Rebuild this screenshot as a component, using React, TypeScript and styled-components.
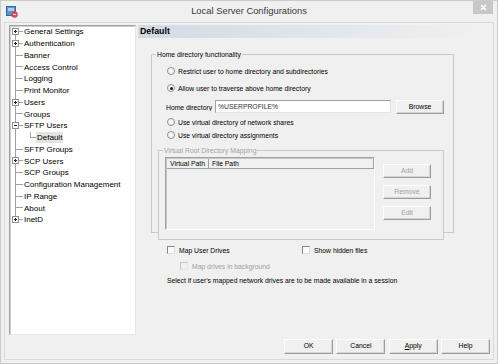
import React from "react";
import styled, { createGlobalStyle } from "styled-components";

const GlobalStyle = createGlobalStyle`
  html, body {
    margin: 0;
    padding: 0;
    background: #f0f0f0;
  }
  body {
    font-family: "Liberation Sans", Arial, sans-serif;
  }
`;

type TreeItem = {
  label: string;
  exp?: "+" | "-";
  child?: boolean;
  selected?: boolean;
};

const treeItems: TreeItem[] = [
  { label: "General Settings", exp: "+" },
  { label: "Authentication", exp: "+" },
  { label: "Banner" },
  { label: "Access Control" },
  { label: "Logging" },
  { label: "Print Monitor" },
  { label: "Users", exp: "+" },
  { label: "Groups" },
  { label: "SFTP Users", exp: "-" },
  { label: "Default", child: true, selected: true },
  { label: "SFTP Groups" },
  { label: "SCP Users", exp: "+" },
  { label: "SCP Groups" },
  { label: "Configuration Management" },
  { label: "IP Range" },
  { label: "About" },
  { label: "InetD", exp: "+" },
];

const ROW_H = 11.75;

const Connector = ({
  exp,
  first,
  last,
  child,
}: {
  exp?: "+" | "-";
  first?: boolean;
  last?: boolean;
  child?: boolean;
}) => {
  const cy = 5.5;
  const w = child ? 27 : 14;
  return (
    <svg width={w} height={ROW_H} style={{ display: "block", flexShrink: 0 }} shapeRendering="crispEdges">
      <line x1={5.5} x2={5.5} y1={first ? cy : 0} y2={last ? cy : ROW_H} stroke="#a0a0a0" />
      {child ? (
        <>
          <line x1={20.5} x2={20.5} y1={0} y2={cy} stroke="#a0a0a0" />
          <line x1={20.5} x2={26} y1={cy} y2={cy} stroke="#a0a0a0" />
        </>
      ) : (
        <line x1={5.5} x2={13} y1={cy} y2={cy} stroke="#a0a0a0" />
      )}
      {exp && (
        <>
          <rect x={2.5} y={2.5} width={6} height={6} fill="#fff" stroke="#919191" />
          <line x1={4} x2={7} y1={cy} y2={cy} stroke="#222" />
          {exp === "+" && <line x1={5.5} x2={5.5} y1={4} y2={7} stroke="#222" />}
        </>
      )}
    </svg>
  );
};

export default function App() {
  return (
    <>
      <GlobalStyle />
      <Styled.Frame>
        <Styled.TitleBar>
          <Styled.IconSlot>
            <svg width="12" height="12" viewBox="0 0 12 12">
              <rect x="0.5" y="0.5" width="9" height="9" fill="#5b93cf" stroke="#36689f" />
              <rect x="2" y="2" width="6" height="3" fill="#a9d0f0" />
              <circle cx="8.5" cy="8.5" r="3.2" fill="#d9474f" />
              <line x1="7" y1="8.5" x2="10" y2="8.5" stroke="#fbe3e3" strokeWidth="1" />
            </svg>
          </Styled.IconSlot>
          <Styled.Title>Local Server Configurations</Styled.Title>
          <Styled.CloseButton>
            <svg width="7" height="7" viewBox="0 0 7 7">
              <path d="M1 1L6 6M6 1L1 6" stroke="#fff" strokeWidth="1.6" />
            </svg>
          </Styled.CloseButton>
        </Styled.TitleBar>

        <Styled.Client>
          <Styled.Main>
            <Styled.Tree>
              {treeItems.map((it, i) => (
                <Styled.TreeRow key={it.label}>
                  <Connector
                    exp={it.exp}
                    child={it.child}
                    first={i === 0}
                    last={i === treeItems.length - 1}
                  />
                  <Styled.TreeLabel $selected={it.selected}>{it.label}</Styled.TreeLabel>
                </Styled.TreeRow>
              ))}
            </Styled.Tree>

            <Styled.Panel>
              <Styled.Header>Default</Styled.Header>
              <Styled.Content>
                <Styled.GroupBox $w={303} $mt={16} $ml={0}>
                  <Styled.Legend>Home directory functionality</Styled.Legend>
                  <Styled.OptionRow $mt={5} $ml={15}>
                    <Styled.Radio />
                    <span>Restrict user to home directory and subdirectories</span>
                  </Styled.OptionRow>
                  <Styled.OptionRow $mt={5} $ml={15}>
                    <Styled.Radio $checked />
                    <span>Allow user to traverse above home directory</span>
                  </Styled.OptionRow>
                  <Styled.HomeRow>
                    <Styled.FieldLabel>Home directory</Styled.FieldLabel>
                    <Styled.TextField>%USERPROFILE%</Styled.TextField>
                    <Styled.Button $w={48} $h={14} $ml={5}>
                      Browse
                    </Styled.Button>
                  </Styled.HomeRow>
                  <Styled.OptionRow $mt={2} $ml={15}>
                    <Styled.Radio />
                    <span>Use virtual directory of network shares</span>
                  </Styled.OptionRow>
                  <Styled.OptionRow $mt={1} $ml={15}>
                    <Styled.Radio />
                    <span>Use virtual directory assignments</span>
                  </Styled.OptionRow>

                  <Styled.GroupBox $w={286} $mt={9} $ml={6} $mb={-8}>
                    <Styled.Legend $disabled>Virtual Root Directory Mapping</Styled.Legend>
                    <Styled.MappingBody>
                      <Styled.ListView>
                        <Styled.ListHeader>
                          <Styled.HeaderCell $w={42}>Virtual Path</Styled.HeaderCell>
                          <Styled.HeaderCell>File Path</Styled.HeaderCell>
                        </Styled.ListHeader>
                      </Styled.ListView>
                      <Styled.SideButtons>
                        <Styled.Button $w={48} $h={14} $disabled>
                          Add
                        </Styled.Button>
                        <Styled.Button $w={48} $h={14} $disabled>
                          Remove
                        </Styled.Button>
                        <Styled.Button $w={48} $h={14} $disabled>
                          Edit
                        </Styled.Button>
                      </Styled.SideButtons>
                    </Styled.MappingBody>
                  </Styled.GroupBox>
                </Styled.GroupBox>

                <Styled.CheckLine $mt={11} $ml={16}>
                  <Styled.CheckItem $w={135}>
                    <Styled.Check />
                    <span>Map User Drives</span>
                  </Styled.CheckItem>
                  <Styled.CheckItem>
                    <Styled.Check />
                    <span>Show hidden files</span>
                  </Styled.CheckItem>
                </Styled.CheckLine>
                <Styled.CheckLine $mt={4} $ml={29}>
                  <Styled.CheckItem $disabled>
                    <Styled.Check $disabled />
                    <span>Map drives in background</span>
                  </Styled.CheckItem>
                </Styled.CheckLine>
                <Styled.Note>
                  Select if user's mapped network drives are to be made available in a session
                </Styled.Note>
              </Styled.Content>
            </Styled.Panel>
          </Styled.Main>

          <Styled.Footer>
            <Styled.Button $w={49} $h={15}>OK</Styled.Button>
            <Styled.Button $w={49} $h={15}>Cancel</Styled.Button>
            <Styled.Button $w={49} $h={15}>
              <u>A</u>pply
            </Styled.Button>
            <Styled.Button $w={49} $h={15}>Help</Styled.Button>
          </Styled.Footer>
        </Styled.Client>
      </Styled.Frame>
    </>
  );
}

const Styled = {
  Frame: styled.div`
    width: 498px;
    height: 364px;
    box-sizing: border-box;
    border: 1px solid #cbcbcb;
    background: #f0f0f0;
    padding: 0 3px 3px;
    display: flex;
    flex-direction: column;
  `,
  TitleBar: styled.div`
    height: 21px;
    flex-shrink: 0;
    display: grid;
    grid-template-columns: 1fr auto 1fr;
    align-items: start;
  `,
  IconSlot: styled.div`
    margin: 3px 0 0 2px;
    height: 12px;
  `,
  Title: styled.div`
    font-size: 9.4px;
    line-height: 19px;
    color: #3a3a3a;
    white-space: nowrap;
  `,
  CloseButton: styled.div`
    justify-self: end;
    margin-right: 1px;
    width: 20px;
    height: 13px;
    background: #c7c7c7;
    display: flex;
    align-items: center;
    justify-content: center;
  `,
  Client: styled.div`
    flex: 1;
    border: 1px solid #d9d9d9;
    background: #f0f0f0;
    display: flex;
    flex-direction: column;
  `,
  Main: styled.div`
    display: flex;
    padding: 2px 0 0 4px;
  `,
  Tree: styled.div`
    width: 127px;
    height: 310px;
    flex-shrink: 0;
    box-sizing: border-box;
    background: #fff;
    border: 1px solid;
    border-color: #a0a0a0 #e6e6e6 #e6e6e6 #a0a0a0;
    box-shadow: inset 1px 1px 0 #cfcfcf;
  `,
  TreeRow: styled.div`
    height: ${ROW_H}px;
    display: flex;
    align-items: center;
    white-space: nowrap;
  `,
  TreeLabel: styled.span<{ $selected?: boolean }>`
    font-size: 8px;
    line-height: 11px;
    color: #000;
    padding: 0 1px;
    margin-left: -1px;
    background: ${(p) => (p.$selected ? "#e3e3e3" : "transparent")};
  `,
  Panel: styled.div`
    flex: 1;
    margin-left: 2px;
    display: flex;
    flex-direction: column;
    font-size: 6.8px;
    color: #000;
  `,
  Header: styled.div`
    height: 13px;
    line-height: 13px;
    padding-left: 2px;
    font-size: 8.8px;
    font-weight: bold;
    background: linear-gradient(90deg, #d2dae4 0%, #e1e6ec 50%, #f0f0f0 96%);
  `,
  Content: styled.div`
    padding-left: 13px;
  `,
  GroupBox: styled.div<{ $w: number; $mt: number; $ml: number; $mb?: number }>`
    box-sizing: border-box;
    width: ${(p) => p.$w}px;
    margin: ${(p) => p.$mt}px 0 ${(p) => p.$mb ?? 0}px ${(p) => p.$ml}px;
    border: 1px solid #c9c9c9;
    background: #f0f0f0;
  `,
  Legend: styled.div<{ $disabled?: boolean }>`
    width: fit-content;
    height: 10px;
    line-height: 10px;
    margin: -5px 0 0 4px;
    padding: 0 1px;
    background: #f0f0f0;
    white-space: nowrap;
    color: ${(p) => (p.$disabled ? "#a3a3a3" : "#000")};
  `,
  OptionRow: styled.div<{ $mt: number; $ml: number }>`
    height: 12px;
    margin: ${(p) => p.$mt}px 0 0 ${(p) => p.$ml}px;
    display: flex;
    align-items: center;
    gap: 3px;
    white-space: nowrap;
  `,
  Radio: styled.span<{ $checked?: boolean }>`
    width: 8px;
    height: 8px;
    box-sizing: border-box;
    border-radius: 50%;
    border: 1px solid #8b8b8b;
    background: #f6f6f6;
    display: flex;
    align-items: center;
    justify-content: center;
    &::after {
      content: "";
      width: 3px;
      height: 3px;
      border-radius: 50%;
      background: #1a1a1a;
      display: ${(p) => (p.$checked ? "block" : "none")};
    }
  `,
  HomeRow: styled.div`
    height: 14px;
    margin: 6px 0 0 14px;
    display: flex;
    align-items: center;
  `,
  FieldLabel: styled.span`
    width: 49px;
    overflow: hidden;
    white-space: nowrap;
  `,
  TextField: styled.div`
    box-sizing: border-box;
    width: 176px;
    height: 13px;
    align-self: flex-start;
    padding-left: 2px;
    line-height: 11px;
    background: #fff;
    border: 1px solid;
    border-color: #a0a0a0 #e3e3e3 #e3e3e3 #a0a0a0;
    color: #333;
  `,
  MappingBody: styled.div`
    display: flex;
    margin-top: 1px;
    padding: 0 0 9px 6px;
  `,
  ListView: styled.div`
    box-sizing: border-box;
    width: 210px;
    height: 73px;
    background: #f0f0f0;
    border: 1px solid;
    border-color: #a0a0a0 #fff #fff #a0a0a0;
    box-shadow: inset 1px 1px 0 #c8c8c8;
    padding: 1px 0 0 1px;
  `,
  ListHeader: styled.div`
    display: flex;
    height: 10px;
  `,
  HeaderCell: styled.div<{ $w?: number }>`
    box-sizing: border-box;
    ${(p) => (p.$w ? `width: ${p.$w}px;` : "flex: 1;")}
    padding-left: 3px;
    line-height: 9px;
    border-right: 1px solid #a0a0a0;
    border-bottom: 1px solid #a0a0a0;
    white-space: nowrap;
  `,
  SideButtons: styled.div`
    display: flex;
    flex-direction: column;
    gap: 7px;
    margin: 7px 0 0 8px;
  `,
  Button: styled.button<{ $w: number; $h: number; $ml?: number; $disabled?: boolean }>`
    box-sizing: border-box;
    width: ${(p) => p.$w}px;
    height: ${(p) => p.$h}px;
    margin: 0 0 0 ${(p) => p.$ml ?? 0}px;
    padding: 0;
    font-family: inherit;
    font-size: 6.8px;
    line-height: 1;
    color: ${(p) => (p.$disabled ? "#a0a0a0" : "#000")};
    background: #f0f0f0;
    border: 1px solid;
    border-color: #fdfdfd #9c9c9c #9c9c9c #fdfdfd;
    box-shadow: inset -1px -1px 0 #d6d6d6;
    flex-shrink: 0;
    u {
      text-decoration-thickness: 1px;
    }
  `,
  CheckLine: styled.div<{ $mt: number; $ml: number }>`
    height: 12px;
    margin: ${(p) => p.$mt}px 0 0 ${(p) => p.$ml}px;
    display: flex;
    align-items: center;
  `,
  CheckItem: styled.div<{ $w?: number; $disabled?: boolean }>`
    display: flex;
    align-items: center;
    gap: 4px;
    white-space: nowrap;
    ${(p) => (p.$w ? `width: ${p.$w}px;` : "")}
    color: ${(p) => (p.$disabled ? "#a0a0a0" : "#000")};
  `,
  Check: styled.span<{ $disabled?: boolean }>`
    width: 8px;
    height: 8px;
    box-sizing: border-box;
    border: 1px solid;
    border-color: ${(p) =>
      p.$disabled ? "#c4c4c4 #e6e6e6 #e6e6e6 #c4c4c4" : "#848484 #dedede #dedede #848484"};
    background: ${(p) => (p.$disabled ? "#f0f0f0" : "#fafafa")};
  `,
  Note: styled.div`
    height: 12px;
    line-height: 12px;
    margin: 3px 0 0 16px;
    white-space: nowrap;
  `,
  Footer: styled.div`
    display: flex;
    justify-content: flex-end;
    gap: 3.3px;
    margin-top: 4px;
    padding-right: 3px;
  `,
};
